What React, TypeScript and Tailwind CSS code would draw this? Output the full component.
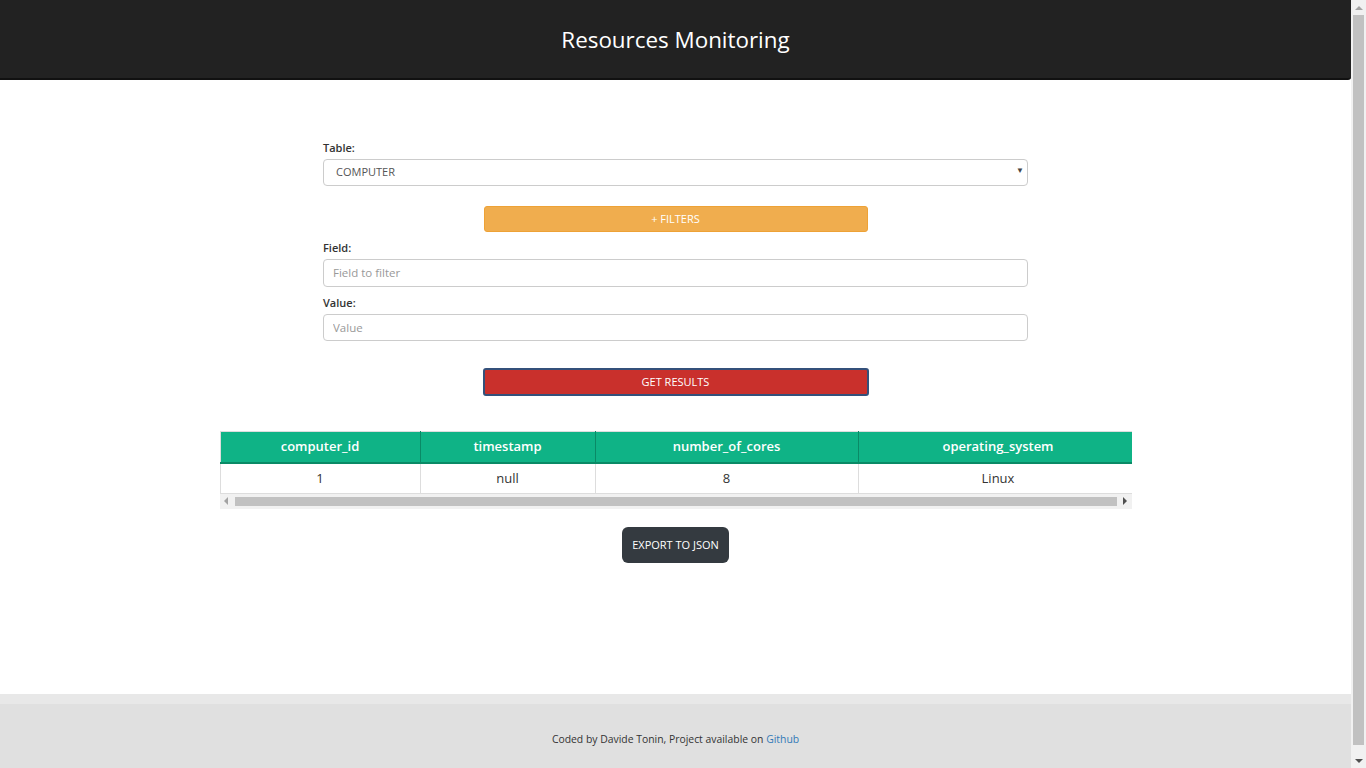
import React from "react";

const columns = ["computer_id", "timestamp", "number_of_cores", "operating_system"];
const widths = ["w-[200px]", "w-[175px]", "w-[263px]", "w-[280px]"];
const row = ["1", "null", "8", "Linux"];

// triangle used on the scrollbar buttons
const Arrow: React.FC<{ dir: "up" | "down" | "left" | "right"; color: string }> = ({ dir, color }) => {
  const pts = {
    up: "0,4 4,0 8,4",
    down: "0,0 8,0 4,4",
    left: "4,0 4,8 0,4",
    right: "0,0 0,8 4,4",
  }[dir];
  const vertical = dir === "up" || dir === "down";
  return (
    <svg width={vertical ? 8 : 4} height={vertical ? 4 : 8} viewBox={vertical ? "0 0 8 4" : "0 0 4 8"}>
      <polygon points={pts} fill={color} />
    </svg>
  );
};

const App: React.FC = () => {
  return (
    <div className="h-screen flex overflow-hidden bg-white font-['Open_Sans',sans-serif] text-[#333]">
      <div className="flex-1 flex flex-col">
        {/* header */}
        <header className="h-[80px] shrink-0 bg-[#222] border-b-2 border-[#111] rounded-br-[3px] flex items-center justify-center pt-[2px]">
          <h1 className="text-white text-[22.4px] leading-none">Resources Monitoring</h1>
        </header>

        <main className="flex-1 flex flex-col items-center pt-[60px]">
          <div className="w-[705px] flex flex-col">
            <label className="text-[11px] font-semibold leading-[15px]">Table:</label>
            <div className="relative mt-[3px]">
              <select className="w-full h-[27px] appearance-none border border-[#ccc] rounded-[4px] bg-white pl-3 text-[11px] text-[#555] outline-none">
                <option>COMPUTER</option>
              </select>
              <span className="absolute right-[4px] top-[6px] text-[8px] text-[#444] pointer-events-none">▼</span>
            </div>

            <div className="flex justify-center mt-5">
              <button className="w-[384px] h-[26px] bg-[#f0ad4e] border border-[#eea236] rounded-[3px] text-white text-[11px]">
                + FILTERS
              </button>
            </div>

            <label className="mt-[8px] text-[11px] font-semibold leading-4">Field:</label>
            <input
              className="mt-[3px] h-[28px] border border-[#ccc] rounded-[4px] px-[9px] text-[11.5px] placeholder:text-[#999] outline-none"
              placeholder="Field to filter"
            />
            <label className="mt-[8px] text-[11px] font-semibold leading-4">Value:</label>
            <input
              className="mt-[3px] h-[27px] border border-[#ccc] rounded-[4px] px-[9px] text-[11.5px] placeholder:text-[#999] outline-none"
              placeholder="Value"
            />

            <div className="flex justify-center mt-[27px]">
              <button className="w-[386px] h-[28px] bg-[#c9302c] border-2 border-[#34507a] rounded-[3px] text-white text-[11px]">
                GET RESULTS
              </button>
            </div>
          </div>

          {/* results */}
          <div className="w-[912px] mt-[35px]">
            <div className="overflow-hidden">
              <table className="border-collapse w-[918px] table-fixed text-[13px]">
                <thead>
                  <tr className="h-[32px] bg-[#0fb386] text-white">
                    {columns.map((c, i) => (
                      <th
                        key={c}
                        className={`${widths[i]} font-semibold border-x border-b-2 border-[#0a8a66] border-t border-t-[#ddd] first:border-l-[#ddd]`}
                      >
                        {c}
                      </th>
                    ))}
                  </tr>
                </thead>
                <tbody>
                  <tr className="h-[30px]">
                    {row.map((v, i) => (
                      <td key={i} className="text-center border border-[#ddd]">
                        {v}
                      </td>
                    ))}
                  </tr>
                </tbody>
              </table>
            </div>
            <div className="h-[15px] bg-[#f1f1f1] flex items-center">
              <div className="w-[13px] flex justify-center">
                <Arrow dir="left" color="#a3a3a3" />
              </div>
              <div className="flex-1 h-[9px] bg-[#c1c1c1] ml-[2px] mr-[2px]" />
              <div className="w-[13px] flex justify-center">
                <Arrow dir="right" color="#505050" />
              </div>
            </div>
          </div>

          <button className="mt-[18px] h-[36px] px-[10px] bg-[#343a40] rounded-[6px] text-white text-[11px]">
            EXPORT TO JSON
          </button>
        </main>

        {/* footer */}
        <footer className="h-[74px] shrink-0 bg-[#e0e0e0] border-t-[10px] border-[#e8e8e8] flex items-center justify-center pt-[8px]">
          <p className="text-[10.4px] text-[#333]">
            Coded by Davide Tonin, Project available on{" "}
            <a className="text-[#337ab7]" href="#">
              Github
            </a>
          </p>
        </footer>
      </div>

      {/* page scrollbar */}
      <div className="w-[15px] bg-[#f1f1f1] flex flex-col items-center">
        <div className="h-[15px] flex items-center">
          <Arrow dir="up" color="#a3a3a3" />
        </div>
        <div className="flex-1 w-[11px] bg-[#c1c1c1] mb-[8px]" />
        <div className="h-[15px] flex items-center">
          <Arrow dir="down" color="#505050" />
        </div>
      </div>
    </div>
  );
};

export default App;
